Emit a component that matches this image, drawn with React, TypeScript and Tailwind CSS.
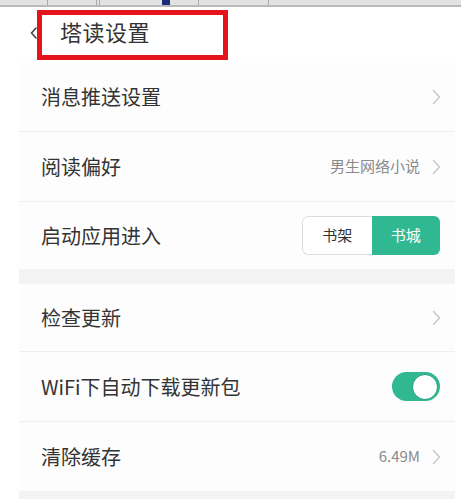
import React from "react";

const Chevron = () => (
  <svg width="9" height="16" viewBox="0 0 9 16" fill="none" className="shrink-0">
    <path d="M1.5 1.5 L7.5 8 L1.5 14.5" stroke="#c4c4c4" strokeWidth="1.3" strokeLinecap="round" strokeLinejoin="round" />
  </svg>
);

const Row = ({ children, h, border = true }: { children: React.ReactNode; h: string; border?: boolean }) => (
  <div className={`flex items-center justify-between pl-[22px] pr-[14px] bg-[#fdfdfd] ${h} ${border ? "border-b border-[#efefef]" : ""}`}>
    {children}
  </div>
);

export default function App() {
  return (
    <div
      className="w-[461px] h-[499px] bg-white overflow-hidden flex flex-col"
      style={{ fontFamily: '"Noto Sans CJK SC", "Noto Sans", sans-serif' }}
    >
      {/* top strip */}
      <div className="h-[7px] shrink-0 bg-[#e2e2e2] border-b-2 border-[#b9b9b9] flex relative">
        <div className="w-[48px] border-r border-[#a8a8a8]" />
        <div className="w-[49px] border-r border-[#a8a8a8]" />
        <div className="w-[3px] border-r border-[#a8a8a8]" />
        <div className="w-[62px]" />
        <div className="w-[8px] bg-[#1c2a7a]" />
        <div className="w-[29px] border-r border-[#a8a8a8]" />
        <div className="w-[70px] border-r border-[#a8a8a8]" />
      </div>

      <div className="flex flex-1">
        <div className="w-[19px] shrink-0 bg-white" />
        <div className="flex-1 flex flex-col">
          {/* header */}
          <div className="h-[56px] flex items-start bg-white">
            <svg width="8" height="12" viewBox="0 0 8 12" fill="none" className="ml-[11px] mt-[20px] shrink-0">
              <path d="M6 1 L1.5 6 L6 11" stroke="#444" strokeWidth="1.6" strokeLinecap="round" strokeLinejoin="round" />
            </svg>
            <div className="ml-[-1px] mt-[3px] w-[191px] h-[50px] border-[5px] border-[#e3141b] flex items-start pt-[4px] pl-[18px] bg-white">
              <span className="text-[22px] text-[#333] leading-[24px] tracking-[0.5px]">塔读设置</span>
            </div>
          </div>

          <Row h="h-[69px]">
            <span className="text-[20px] text-[#333]">消息推送设置</span>
            <Chevron />
          </Row>
          <Row h="h-[70px]">
            <span className="text-[20px] text-[#333]">阅读偏好</span>
            <div className="flex items-center gap-[12px]">
              <span className="text-[15px] text-[#8a8a8a]">男生网络小说</span>
              <Chevron />
            </div>
          </Row>
          <Row h="h-[67px]" border={false}>
            <span className="text-[20px] text-[#333]">启动应用进入</span>
            <div className="flex h-[39px] w-[138px] rounded-[6px] overflow-hidden mr-[1px]">
              <div className="flex-1 flex items-center justify-center border border-r-0 border-[#dcdcdc] rounded-l-[6px] bg-white text-[15px] text-[#333]">
                书架
              </div>
              <div className="flex-1 flex items-center justify-center bg-[#2fb892] text-[15px] text-white">
                书城
              </div>
            </div>
          </Row>

          <div className="h-[15px] bg-[#f3f3f3]" />

          <Row h="h-[68px]">
            <span className="text-[20px] text-[#333]">检查更新</span>
            <Chevron />
          </Row>
          <Row h="h-[70px]">
            <span className="text-[20px] text-[#333]">WiFi下自动下载更新包</span>
            <div className="w-[48px] h-[29px] rounded-full bg-[#2fb892] flex items-center justify-end pr-[2px] mr-[1px]">
              <div className="w-[26px] h-[26px] rounded-full bg-white border border-[#23a07c]" />
            </div>
          </Row>
          <Row h="h-[69px]" border={false}>
            <span className="text-[20px] text-[#333]">清除缓存</span>
            <div className="flex items-center gap-[12px]">
              <span className="text-[15px] text-[#8a8a8a]">6.49M</span>
              <Chevron />
            </div>
          </Row>
          <div className="flex-1 bg-[#f3f3f3]" />
        </div>
        <div className="w-[6px] shrink-0 bg-white" />
      </div>
    </div>
  );
}
